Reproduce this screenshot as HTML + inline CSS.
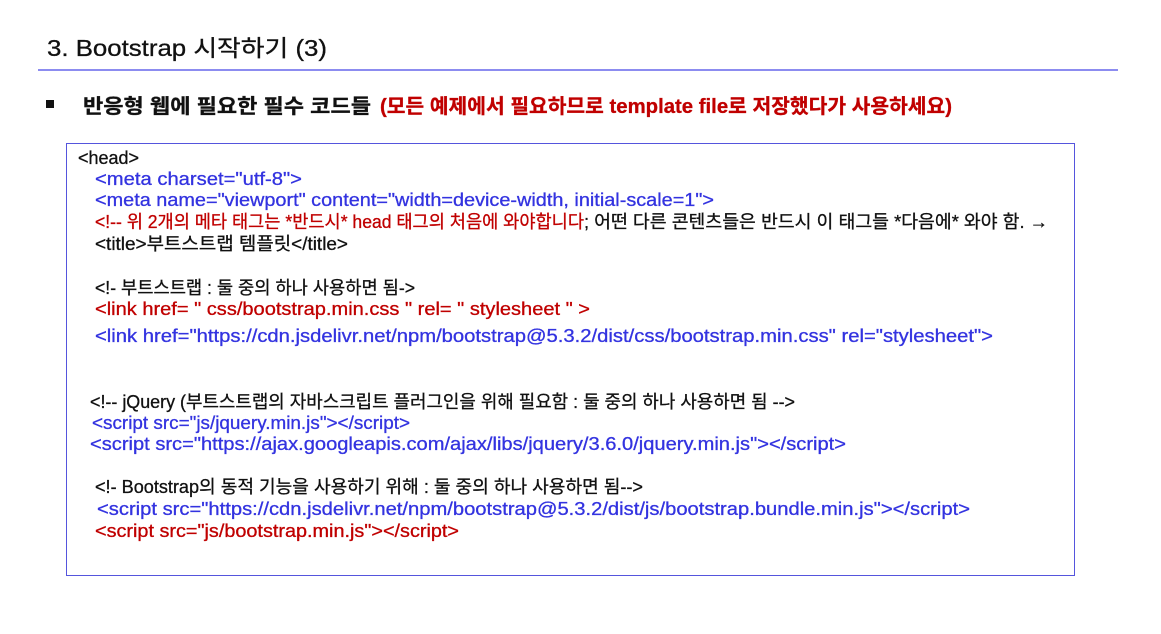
<!DOCTYPE html>
<html><head><meta charset="utf-8"><style>
html,body{margin:0;padding:0;background:#fff;}
svg{display:block;}
text{font-family:"Liberation Sans","Noto Sans CJK KR",sans-serif;}
.b{fill:#3333e0;stroke:#3333e0;stroke-width:0.3}.r{fill:#c00000;stroke:#c00000;stroke-width:0.3}.k{fill:#111;stroke:#111;stroke-width:0.3}
</style></head><body>
<svg width="1161" height="634" viewBox="0 0 1161 634" xmlns="http://www.w3.org/2000/svg">
<rect width="1161" height="634" fill="#fff"/>
<text x="47" y="56" font-size="23" class="k" textLength="280" lengthAdjust="spacingAndGlyphs">3. Bootstrap 시작하기 (3)</text>
<rect x="38" y="69" width="1080" height="2" fill="#8c8cf0"/>
<rect x="46" y="100" width="8" height="8" fill="#111"/>
<text x="83" y="113" font-size="20" font-weight="bold" class="k" textLength="288" lengthAdjust="spacingAndGlyphs">반응형 웹에 필요한 필수 코드들</text>
<text x="380" y="113" font-size="20" font-weight="bold" class="r" textLength="572" lengthAdjust="spacingAndGlyphs">(모든 예제에서 필요하므로 template file로 저장했다가 사용하세요)</text>
<rect x="66.5" y="143.5" width="1008" height="432" fill="none" stroke="#5555dd" stroke-width="1"/>
<g font-size="18">
<text x="78" y="164" class="k" textLength="61" lengthAdjust="spacingAndGlyphs">&lt;head&gt;</text>
<text x="95" y="185" class="b" textLength="207" lengthAdjust="spacingAndGlyphs">&lt;meta charset="utf-8"&gt;</text>
<text x="95" y="206" class="b" textLength="619" lengthAdjust="spacingAndGlyphs">&lt;meta name="viewport" content="width=device-width, initial-scale=1"&gt;</text>
<text x="95" y="228" class="r" textLength="489" lengthAdjust="spacingAndGlyphs">&lt;!-- 위 2개의 메타 태그는 *반드시* head 태그의 처음에 와야합니다</text>
<text x="584" y="228" class="k" textLength="464" lengthAdjust="spacingAndGlyphs">; 어떤 다른 콘텐츠들은 반드시 이 태그들 *다음에* 와야 함. →</text>
<text x="95" y="250" class="k" textLength="253" lengthAdjust="spacingAndGlyphs">&lt;title&gt;부트스트랩  템플릿&lt;/title&gt;</text>
<text x="95" y="294" class="k" textLength="320" lengthAdjust="spacingAndGlyphs">&lt;!- 부트스트랩 :  둘 중의 하나 사용하면 됨-&gt;</text>
<text x="95" y="315" class="r" textLength="495" lengthAdjust="spacingAndGlyphs">&lt;link href= " css/bootstrap.min.css "  rel= " stylesheet " &gt;</text>
<text x="95" y="342" class="b" textLength="898" lengthAdjust="spacingAndGlyphs">&lt;link href="https://cdn.jsdelivr.net/npm/bootstrap@5.3.2/dist/css/bootstrap.min.css" rel="stylesheet"&gt;</text>
<text x="90" y="408" class="k" textLength="705" lengthAdjust="spacingAndGlyphs">&lt;!-- jQuery (부트스트랩의 자바스크립트 플러그인을 위해 필요함 : 둘 중의 하나 사용하면 됨 --&gt;</text>
<text x="92" y="429" class="b" textLength="318" lengthAdjust="spacingAndGlyphs">&lt;script src="js/jquery.min.js"&gt;&lt;/script&gt;</text>
<text x="90" y="450" class="b" textLength="756" lengthAdjust="spacingAndGlyphs">&lt;script src="https://ajax.googleapis.com/ajax/libs/jquery/3.6.0/jquery.min.js"&gt;&lt;/script&gt;</text>
<text x="95" y="493" class="k" textLength="548" lengthAdjust="spacingAndGlyphs">&lt;!- Bootstrap의 동적 기능을 사용하기 위해 : 둘 중의 하나 사용하면 됨--&gt;</text>
<text x="97" y="515" class="b" textLength="873" lengthAdjust="spacingAndGlyphs">&lt;script src="https://cdn.jsdelivr.net/npm/bootstrap@5.3.2/dist/js/bootstrap.bundle.min.js"&gt;&lt;/script&gt;</text>
<text x="95" y="537" class="r" textLength="364" lengthAdjust="spacingAndGlyphs">&lt;script src="js/bootstrap.min.js"&gt;&lt;/script&gt;</text>
</g>
</svg>
</body></html>
